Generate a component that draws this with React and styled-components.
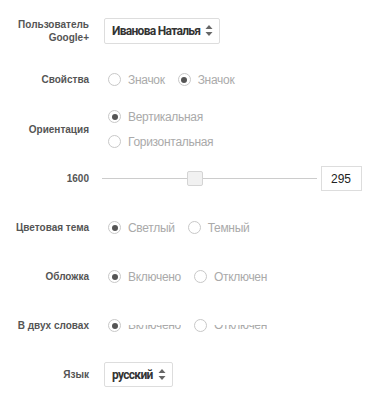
import { createGlobalStyle } from 'styled-components';
import styled from 'styled-components';

const Global = createGlobalStyle`
    body {
        margin: 0;
        background: #fff;
        font-family: "Liberation Sans", Arial, sans-serif;
    }
`

const Form = styled.div`
    padding-top: 6px;
    width: 370px;
`

const Row = styled.div`
    display: grid;
    grid-template-columns: 89px 1fr;
    column-gap: ${props => props.gap || 15}px;
    align-items: center;
    height: ${props => props.h || 49}px;
`

const Label = styled.div`
    text-align: right;
    font-size: 10px;
    font-weight: bold;
    color: #555;
    line-height: 13px;
`

const Options = styled.div`
    display: flex;
    flex-direction: ${props => props.column ? 'column' : 'row'};
    padding-left: 4px;
`

const Option = styled.label`
    display: flex;
    align-items: center;
    height: 25px;
    margin-right: 13px;
    font-size: 12px;
    letter-spacing: -0.3px;
    color: #aaa;
`

const Circle = styled.span`
    position: relative;
    box-sizing: border-box;
    width: 13px;
    height: 13px;
    border: 1px solid #c8c8c8;
    border-radius: 50%;
    margin-right: 7px;
    flex-shrink: 0;

    &::after {
        content: '';
        display: ${props => props.checked ? 'block' : 'none'};
        position: absolute;
        left: 2.5px;
        top: 2.5px;
        width: 6px;
        height: 6px;
        border-radius: 50%;
        background: #555;
    }
`

const Clipped = styled.span`
    display: block;
    height: 6px;
    line-height: 0px;
    overflow: hidden;
    margin-top: 4px;
`

const Select = styled.div`
    box-sizing: border-box;
    display: inline-flex;
    align-items: center;
    justify-self: start;
    height: ${props => props.h || 26}px;
    padding: 0 6px 0 7px;
    border: 1px solid #ddd;
    border-radius: 2px;
    font-family: Roboto, "Liberation Sans", sans-serif;
    font-size: 12px;
    letter-spacing: -0.7px;
    font-weight: bold;
    color: #333;
`

const Arrows = styled.svg`
    margin-left: 5px;
`

const SliderBox = styled.div`
    display: flex;
    align-items: center;
    margin-left: -1px;
`

const Track = styled.div`
    position: relative;
    width: 215px;
    height: 1px;
    background: #ccc;
`

const Thumb = styled.div`
    position: absolute;
    top: -7px;
    box-sizing: border-box;
    width: 16px;
    height: 15px;
    background: #f1f1f1;
    border: 1px solid #d4d4d4;
    border-radius: 2px;
`

const NumberBox = styled.div`
    box-sizing: border-box;
    width: 41px;
    height: 25px;
    margin-left: 4px;
    border: 1px solid #ddd;
    display: flex;
    align-items: center;
    justify-content: flex-end;
    padding-right: 10px;
    font-size: 12px;
    color: #222;
`

const SortIcon = () => (
    <Arrows width="8" height="11" viewBox="0 0 8 11">
        <path d="M4 0 L7.5 4 L0.5 4 Z" fill="#666" />
        <path d="M4 11 L7.5 7 L0.5 7 Z" fill="#666" />
    </Arrows>
)

const Radio = ({ checked, children, clipped }) => (
    <Option>
        <Circle checked={checked} />
        {clipped ? <Clipped>{children}</Clipped> : children}
    </Option>
)

const App = () => {
    const value = 295;
    const pos = 85;

    return (
        <Form>
            <Global />
            <Row>
                <Label>Пользователь<br />Google+</Label>
                <Select>Иванова Наталья <SortIcon /></Select>
            </Row>
            <Row>
                <Label>Свойства</Label>
                <Options>
                    <Radio>Значок</Radio>
                    <Radio checked>Значок</Radio>
                </Options>
            </Row>
            <Row h={50}>
                <Label>Ориентация</Label>
                <Options column>
                    <Radio checked>Вертикальная</Radio>
                    <Radio>Горизонтальная</Radio>
                </Options>
            </Row>
            <Row gap={14}>
                <Label>1600</Label>
                <SliderBox>
                    <Track>
                        <Thumb style={{ left: pos }} />
                    </Track>
                    <NumberBox>{value}</NumberBox>
                </SliderBox>
            </Row>
            <Row>
                <Label>Цветовая тема</Label>
                <Options>
                    <Radio checked>Светлый</Radio>
                    <Radio>Темный</Radio>
                </Options>
            </Row>
            <Row>
                <Label>Обложка</Label>
                <Options>
                    <Radio checked>Включено</Radio>
                    <Radio>Отключен</Radio>
                </Options>
            </Row>
            <Row>
                <Label>В двух словах</Label>
                <Options>
                    <Radio checked clipped>Включено</Radio>
                    <Radio clipped>Отключен</Radio>
                </Options>
            </Row>
            <Row>
                <Label>Язык</Label>
                <Select h={25}>русский <SortIcon /></Select>
            </Row>
        </Form>
    )
}

export default App;
